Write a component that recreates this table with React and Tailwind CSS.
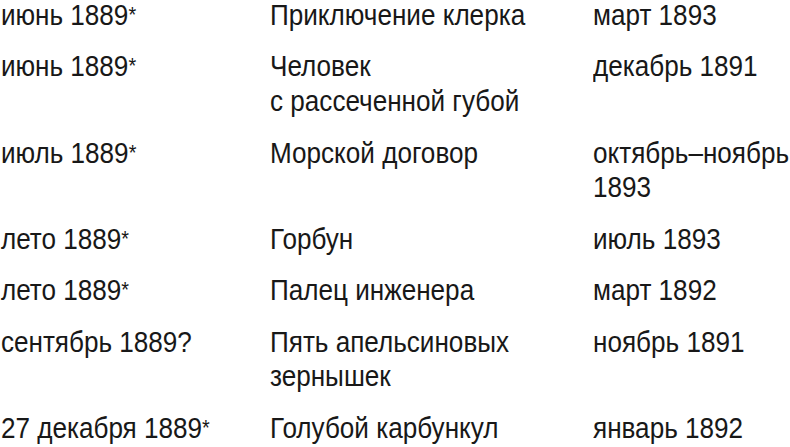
export default function App() {
  const rows = [
    ["июнь 1889*", ["Приключение клерка"], ["март 1893"]],
    ["июнь 1889*", ["Человек", "с рассеченной губой"], ["декабрь 1891"]],
    ["июль 1889*", ["Морской договор"], ["октябрь–ноябрь", "1893"]],
    ["лето 1889*", ["Горбун"], ["июль 1893"]],
    ["лето 1889*", ["Палец инженера"], ["март 1892"]],
    ["сентябрь 1889?", ["Пять апельсиновых", "зернышек"], ["ноябрь 1891"]],
    ["27 декабря 1889*", ["Голубой карбункул"], ["январь 1892"]],
  ];
  const fmt = (s) => {
    if (s.endsWith("*"))
      return (
        <>
          {s.slice(0, -1)}
          <span className="relative top-[-3px] text-[22px] leading-none">*</span>
        </>
      );
    return s;
  };
  const cell = "origin-left scale-x-[0.9] whitespace-nowrap";
  return (
    <div
      className="w-[790px] h-[447px] overflow-hidden bg-white text-[#181818]"
      style={{ fontFamily: '"Liberation Sans", Arial, sans-serif' }}
    >
      <div className="mt-[-2px] flex flex-col gap-[16.6px] text-[29px] leading-[34.8px]">
        {rows.map((r, i) => (
          <div key={i} className="grid grid-cols-[270px_323px_1fr]">
            <div className={cell + " pl-[1px]"}>{fmt(r[0])}</div>
            <div className={cell}>
              {r[1].map((l, j) => (
                <div key={j}>{l}</div>
              ))}
            </div>
            <div className={cell}>
              {r[2].map((l, j) => (
                <div key={j}>{l}</div>
              ))}
            </div>
          </div>
        ))}
      </div>
    </div>
  );
}
